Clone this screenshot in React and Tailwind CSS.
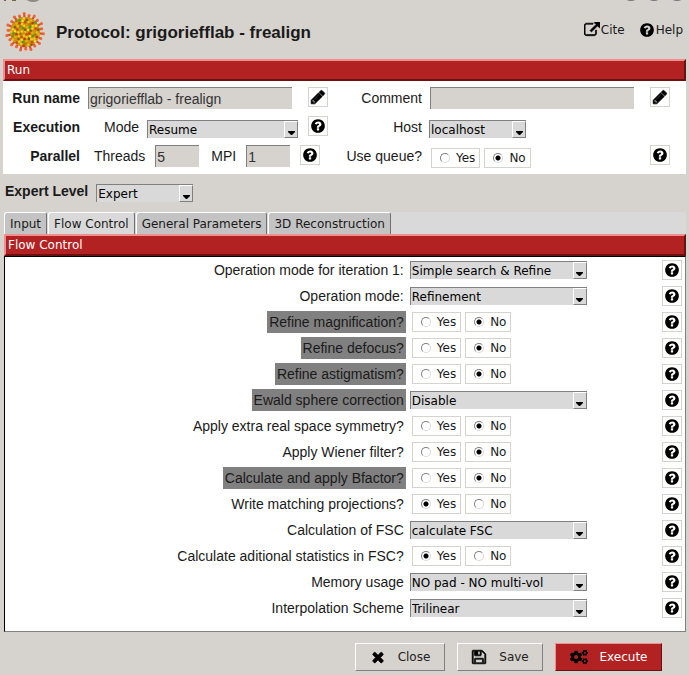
import React from "react";
import { FaCogs } from "react-icons/fa";

const sans = "font-['Liberation_Sans',sans-serif]";
const FORM_OPTIONS = [
  { label: "Operation mode for iteration 1:", select: "Simple search & Refine" },
  { label: "Operation mode:", select: "Refinement" },
  { label: "Refine magnification?", value: "No", expert: true },
  { label: "Refine defocus?", value: "No", expert: true },
  { label: "Refine astigmatism?", value: "No", expert: true },
  { label: "Ewald sphere correction", select: "Disable", expert: true },
  { label: "Apply extra real space symmetry?", value: "No" },
  { label: "Apply Wiener filter?", value: "No" },
  { label: "Calculate and apply Bfactor?", value: "No", expert: true },
  { label: "Write matching projections?", value: "Yes" },
  { label: "Calculation of FSC", select: "calculate FSC" },
  { label: "Calculate aditional statistics in FSC?", value: "Yes" },
  { label: "Memory usage", select: "NO pad - NO multi-vol" },
  { label: "Interpolation Scheme", select: "Trilinear" },
];

const PATHS = {
  question:
    "M1024 1376v-192q0-14-9-23t-23-9h-192q-14 0-23 9t-9 23v192q0 14 9 23t23 9h192q14 0 23-9t9-23zm256-672q0-88-55.5-163t-138.5-116-170-41q-243 0-371 213-15 24 8 42l132 100q7 6 19 6 16 0 25-12 53-68 86-92 34-24 86-24 48 0 85.5 26t37.5 59q0 38-20 61t-68 45q-63 28-115.5 86.5t-52.5 125.5v36q0 14 9 23t23 9h192q14 0 23-9t9-23q0-19 21.5-49.5t54.5-49.5q32-18 49-28.5t46-35 44.5-48 28-60.5 12.5-81zm384 192q0 209-103 385.5t-279.5 279.5-385.5 103-385.5-103-279.5-279.5-103-385.5 103-385.5 279.5-279.5 385.5-103 385.5 103 279.5 279.5 103 385.5z",
  pencil:
    "M491 1536l91-91-235-235-91 91v107h128v128h107zm523-928q0-22-22-22-10 0-17 7l-542 542q-7 7-7 17 0 22 22 22 10 0 17-7l542-542q7-7 7-17zm-54-192l416 416-832 832h-416v-416zm683 96q0 53-37 90l-166 166-416-416 166-165q36-38 90-38 53 0 91 38l235 234q37 39 37 91z",
  external:
    "M1408 928v320q0 119-84.5 203.5t-203.5 84.5h-832q-119 0-203.5-84.5t-84.5-203.5v-832q0-119 84.5-203.5t203.5-84.5h704q14 0 23 9t9 23v64q0 14-9 23t-23 9h-704q-66 0-113 47t-47 113v832q0 66 47 113t113 47h832q66 0 113-47t47-113v-320q0-14 9-23t23-9h64q14 0 23 9t9 23zm384-864v512q0 26-19 45t-45 19-45-19l-176-176-652 652q-10 10-23 10t-23-10l-114-114q-10-10-10-23t10-23l652-652-176-176q-19-19-19-45t19-45 45-19h512q26 0 45 19t19 45z",
  times:
    "M1490 1322q0 40-28 68l-136 136q-28 28-68 28t-68-28l-294-294-294 294q-28 28-68 28t-68-28l-136-136q-28-28-28-68t28-68l294-294-294-294q-28-28-28-68t28-68l136-136q28-28 68-28t68 28l294 294 294-294q28-28 68-28t68 28l136 136q28 28 28 68t-28 68l-294 294 294 294q28 28 28 68z",
  floppy:
    "M512 1536h768v-384h-768v384zm896 0h128v-896q0-14-10-38.5t-20-34.5l-281-281q-10-10-34-20t-39-10v416q0 40-28 68t-68 28h-576q-40 0-68-28t-28-68v-416h-128v1280h128v-416q0-40 28-68t68-28h832q40 0 68 28t28 68v416zm-384-928v-320q0-13-9.5-22.5t-22.5-9.5h-192q-13 0-22.5 9.5t-9.5 22.5v320q0 13 9.5 22.5t22.5 9.5h192q13 0 22.5-9.5t9.5-22.5zm640 32v928q0 40-28 68t-68 28h-1344q-40 0-68-28t-28-68v-1344q0-40 28-68t68-28h928q40 0 88 20t76 48l280 280q28 28 48 76t20 88z",
};

function Icon({ name, className, bold }) {
  return (
    <svg viewBox="0 0 1792 1792" className={className} fill="currentColor" stroke="currentColor" strokeWidth={bold ? 70 : 0} aria-hidden="true">
      <path d={PATHS[name]} />
    </svg>
  );
}

function VirusLogo() {
  const spikes = Array.from({ length: 22 }, (_, i) => {
    const a = (i * 2 * Math.PI) / 22 + 0.1;
    const r = i % 2 ? 17 : 18.5;
    return [20 + 13 * Math.cos(a), 20 + 13 * Math.sin(a), 20 + r * Math.cos(a), 20 + r * Math.sin(a)];
  });
  const spots = Array.from({ length: 80 }, (_, i) => {
    const a = i * 2.39996;
    const r = 14.5 * Math.sqrt(i / 80);
    return [20 + r * Math.cos(a), 20 + r * Math.sin(a), i];
  });
  const colors = ["#e8c01c", "#c8340c", "#f4dc30", "#8a5a08", "#e0b018", "#4c9c20", "#f0d028", "#d89010", "#a87808", "#e8c828", "#d0481c"];
  return (
    <svg viewBox="0 0 40 40" className="size-10" aria-hidden="true">
      {spikes.map(([x1, y1, x2, y2], i) => (
        <g key={i}>
          <line x1={x1} y1={y1} x2={x2} y2={y2} stroke="#d84c24" strokeWidth="2.1" />
          <circle cx={x2} cy={y2} r="1.5" fill="#ee6438" />
        </g>
      ))}
      <circle cx="20" cy="20" r="15" fill="#c8920c" />
      {spots.map(([x, y, i]) => (
        <circle key={i} cx={x} cy={y} r="1.3" fill={colors[(i * 7) % 11]} />
      ))}
      <path d="M34 12a15 15 0 0 1-26 17a15 15 0 0 0 26-17z" fill="#7c3808" opacity=".4" />
    </svg>
  );
}

function IconButton({ icon = "question", label }) {
  return (
    <button type="button" aria-label={label} className="flex size-5 shrink-0 items-center justify-center border border-[#d6d2ce] bg-white text-black">
      <Icon name={icon} bold={icon === "pencil"} className="size-4" />
    </button>
  );
}

function Select({ id, value, className }) {
  return (
    <span className={"relative block h-[18px] border-t border-l border-[#808080] bg-[#d9d9d9] " + className}>
      <select id={id} defaultValue={value} className="block h-full w-full appearance-none pl-px text-xs leading-4 text-black outline-none">
        <option>{value}</option>
      </select>
      <span className="pointer-events-none absolute top-0 right-0 flex h-[17px] w-3.5 items-end justify-center border border-t-white border-r-[#808080] border-b-[#808080] border-l-white bg-[#d9d9d9] pb-0.5">
        <svg viewBox="0 0 7 4" className="h-1 w-[7px]" aria-hidden="true">
          <path d="M0 0h7v1L4 4H3L0 1z" />
        </svg>
      </span>
    </span>
  );
}

function YesNo({ name, value }) {
  return (
    <div className="flex gap-1">
      {["Yes", "No"].map((o) => (
        <label key={o} className="flex h-5 items-center gap-1.5 border border-[#d6d2ce] bg-white pr-1 pl-2 text-xs">
          <input
            type="radio"
            name={name}
            defaultChecked={o === value}
            className="m-0 size-2.5 appearance-none rounded-full border border-t-[#808080] border-r-[#d9d9d9] border-b-[#d9d9d9] border-l-[#808080] bg-white checked:bg-[radial-gradient(circle,#000_0_2px,#fff_3px)]"
          />
          {o}
        </label>
      ))}
    </div>
  );
}

function SectionHeader({ children }) {
  return (
    <h2 className="h-[22px] border-t-2 border-r-2 border-b-2 border-l-2 border-t-[#f08f8f] border-r-[#6b1111] border-b-[#6b1111] border-l-[#f08f8f] bg-[#b22222] px-0.5 text-xs leading-[18px] text-white">
      {children}
    </h2>
  );
}

function TextField({ id, value, className }) {
  return (
    <input
      id={id}
      defaultValue={value}
      className={`${sans} h-[22px] border-t border-l border-[#808080] bg-[#d6d2ce] pl-px text-sm text-[#333] outline-none ${className}`}
    />
  );
}

function RunPanel() {
  const label = `${sans} text-right text-sm leading-[22px]`;
  return (
    <section>
      <SectionHeader>Run</SectionHeader>
      <div className="grid grid-cols-[77px_250px_92px_1fr_auto] gap-y-[7px] bg-white pt-1.5 pr-4 pb-1.5">
        <label htmlFor="run-name" className={`${label} font-bold`}>Run name</label>
        <div className="flex items-start gap-4 pl-2">
          <TextField id="run-name" value="grigoriefflab - frealign" className="w-[204px]" />
          <IconButton icon="pencil" label="Edit run name" />
        </div>
        <label htmlFor="comment" className={label}>Comment</label>
        <div className="pl-2">
          <TextField id="comment" value="" className="block w-[204px]" />
        </div>
        <IconButton icon="pencil" label="Edit comment" />

        <span className={`${label} font-bold`}>Execution</span>
        <div className="flex items-start gap-2 pl-6">
          <label htmlFor="mode" className={label}>Mode</label>
          <div className="pt-1 pr-0.5">
            <Select id="mode" value="Resume" className="w-[151px]" />
          </div>
          <IconButton label="Execution help" />
        </div>
        <label htmlFor="host" className={label}>Host</label>
        <div className="pt-1 pl-[7px]">
          <Select id="host" value="localhost" className="w-[97px]" />
        </div>
        <span />

        <span className={`${label} font-bold`}>Parallel</span>
        <div className="flex items-start gap-2.5 pl-3.5">
          <label htmlFor="threads" className={label}>Threads</label>
          <TextField id="threads" value="5" className="w-11" />
          <label htmlFor="mpi" className={`${label} pl-0.5`}>MPI</label>
          <TextField id="mpi" value="1" className="w-11" />
          <IconButton label="Parallel help" />
        </div>
        <span className={label}>Use queue?</span>
        <div className="pt-[3px] pl-[9px]">
          <YesNo name="queue" value="No" />
        </div>
        <IconButton label="Queue help" />
      </div>
    </section>
  );
}

function Tabs() {
  return (
    <div role="tablist" className="flex h-[22px] items-end gap-px bg-[#d9d9d9]">
      {["Input", "Flow Control", "General Parameters", "3D Reconstruction"].map((t) => (
        <button
          key={t}
          type="button"
          role="tab"
          aria-selected={t === "Flow Control"}
          className="h-[22px] rounded-t-[3px] border-t border-r border-l border-t-white border-r-[#707070] border-l-white bg-[#c3c3c3] px-[5px] text-xs whitespace-nowrap aria-selected:bg-[#d9d9d9]"
        >
          {t}
        </button>
      ))}
    </div>
  );
}

function FormRow({ option, index }) {
  const id = `option-${index}`;
  const tone = option.expert ? "bg-[#808080]" : "";
  return (
    <div className="grid h-[26px] grid-cols-[61fr_39fr_auto] items-center">
      <div className="flex justify-end">
        <label htmlFor={option.select ? id : undefined} className={`${sans} px-0.5 text-sm leading-[22px] text-[#1a1a1a] ${tone}`}>
          {option.label}
        </label>
      </div>
      {option.select ? (
        <div className="pl-1">
          <Select id={id} value={option.select} className="w-[177px]" />
        </div>
      ) : (
        <div className="pl-1.5" role="group" aria-label={option.label}>
          <YesNo name={id} value={option.value} />
        </div>
      )}
      <IconButton label={`Help: ${option.label}`} />
    </div>
  );
}

function ActionButton({ children, primary, className }) {
  const tone = primary
    ? "border-t-[#f08f8f] border-l-[#f08f8f] border-r-[#6b1111] border-b-[#6b1111] bg-[#b22222] text-white"
    : "border-t-white border-l-white border-r-[#808080] border-b-[#808080] text-[#222]";
  return (
    <button type="button" className={`flex h-7 items-center justify-center gap-3 border text-xs ${tone} ${className}`}>
      {children}
    </button>
  );
}

export default function App() {
  return (
    <main className="min-h-screen bg-[#d6d2ce] font-['DejaVu_Sans',sans-serif] text-[#1a1a1a]">
      <div className="flex h-0.5 items-start justify-between overflow-hidden pr-1.5 pl-1">
        <svg viewBox="0 0 36 2" className="h-0.5 w-9" aria-hidden="true">
          <path d="M0 0h2v1H0zM8 0h4v1H8z" fill="#6e6250" />
          <ellipse cx="29" cy="-2" rx="7" ry="4" fill="#8c8986" />
        </svg>
        <svg viewBox="0 0 58 2" className="h-0.5 w-[58px]" aria-hidden="true">
          <ellipse cx="6" cy="-2" rx="6" ry="3" fill="#777" />
          <ellipse cx="29" cy="-2" rx="6" ry="3" fill="#777" />
          <ellipse cx="52" cy="-2" rx="6" ry="3" fill="#777" />
        </svg>
      </div>
      <header className="flex h-[57px] items-start pt-2.5 pr-1.5 pl-[5px]">
        <VirusLogo />
        <h1 className={`${sans} flex-1 pt-2.5 pl-[11px] text-[17px] leading-[22px] font-bold`}>Protocol: grigoriefflab - frealign</h1>
        <nav className="flex gap-3.5 pt-2.5 text-xs leading-4">
          <a href="#cite" className="flex items-center gap-px"><Icon name="external" bold className="size-4 text-black" />Cite</a>
          <a href="#help" className="flex items-center gap-px"><Icon name="question" className="size-4 text-black" />Help</a>
        </nav>
      </header>
      <div className="px-[3px]">
        <RunPanel />
        <div className="flex h-[38px] items-start gap-2 pt-1.5 pl-0.5">
          <label htmlFor="expert" className={`${sans} text-sm leading-[22px] font-bold`}>Expert Level</label>
          <div className="pt-1">
            <Select id="expert" value="Expert" className="w-[97px]" />
          </div>
        </div>
        <div className="pl-px">
          <Tabs />
          <section>
            <SectionHeader>Flow Control</SectionHeader>
            <div className="border border-t-black border-r-[#808080] border-b-[#808080] border-l-black bg-white pr-[3px] pb-2.5">
              {FORM_OPTIONS.map((o, i) => (
                <FormRow key={o.label} option={o} index={i} />
              ))}
            </div>
          </section>
        </div>
      </div>
      <footer className="flex justify-end gap-3 pt-[11px] pr-[27px] pb-[3px]">
        <ActionButton className="w-[90px]"><Icon name="times" bold className="size-4 text-black" />Close</ActionButton>
        <ActionButton className="w-[86px]"><Icon name="floppy" bold className="size-4 text-black" />Save</ActionButton>
        <ActionButton primary className="w-[107px]"><FaCogs className="size-[18px] text-black" aria-hidden="true" />Execute</ActionButton>
      </footer>
    </main>
  );
}
